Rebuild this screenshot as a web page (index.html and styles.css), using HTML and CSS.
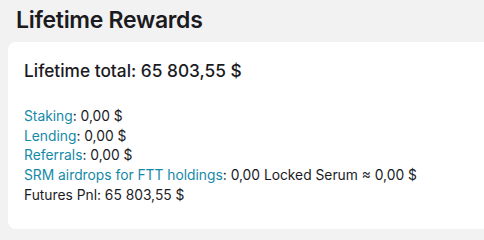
FILE: index.html
```html
<!DOCTYPE html>
<html>
<head>
<meta charset="utf-8">
<link rel="stylesheet" href="styles.css">
</head>
<body>
<h1 class="title">Lifetime Rewards</h1>
<div class="card">
  <h2 class="total">Lifetime total: 65 803,55 $</h2>
  <ul class="list">
    <li><a class="lnk">Staking</a>: 0,00 $</li>
    <li><a class="lnk">Lending</a>: 0,00 $</li>
    <li><a class="lnk">Referrals</a>: 0,00 $</li>
    <li><a class="lnk">SRM airdrops for FTT holdings</a>: 0,00 Locked Serum ≈ 0,00 $</li>
    <li>Futures Pnl: 65 803,55 $</li>
  </ul>
</div>
</body>
</html>
```
FILE: styles.css
```css
html, body {
  margin: 0;
  padding: 0;
  background: #f2f2f2;
  font-family: Inter, "Noto Sans", sans-serif;
  color: #1b1b1f;
  overflow: hidden;
}
.title {
  margin: 0;
  padding: 5px 0 0 16px;
  height: 42px;
  box-sizing: border-box;
  font-size: 23px;
  font-weight: 600;
  letter-spacing: -0.3px;
  line-height: 30px;
}
.card {
  background: #fff;
  margin: 0 -20px 0 8px;
  border-radius: 8px;
  padding: 18px 16px 20px 16px;
  height: 187px;
  box-sizing: border-box;
}
.total {
  margin: 0;
  font-size: 17.3px;
  font-weight: 500;
  line-height: 22px;
}
.list {
  list-style: none;
  margin: 25px 0 0 0;
  padding: 0;
  font-size: 13.8px;
  line-height: 19.7px;
}
.lnk {
  color: #1589a8;
}
```
